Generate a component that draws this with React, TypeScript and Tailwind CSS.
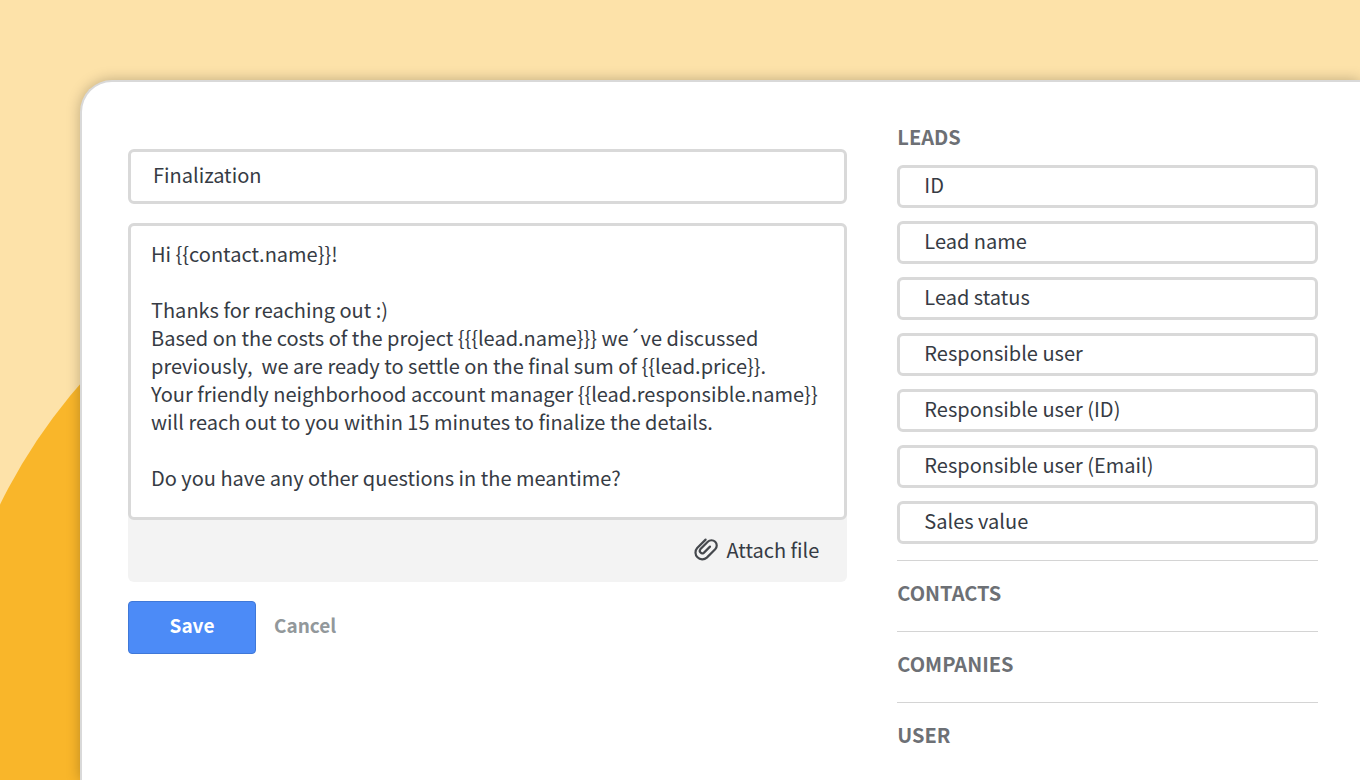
import { useState } from "react";

const message = `Hi {{contact.name}}!

Thanks for reaching out :)
Based on the costs of the project {{{lead.name}}} we´ve discussed
previously,  we are ready to settle on the final sum of {{lead.price}}.
Your friendly neighborhood account manager {{lead.responsible.name}}
will reach out to you within 15 minutes to finalize the details.

Do you have any other questions in the meantime?`;

const leadFields = [
  { label: "ID", token: "{{lead.id}}" },
  { label: "Lead name", token: "{{lead.name}}" },
  { label: "Lead status", token: "{{lead.status}}" },
  { label: "Responsible user", token: "{{lead.responsible.name}}" },
  { label: "Responsible user (ID)", token: "{{lead.responsible.id}}" },
  { label: "Responsible user (Email)", token: "{{lead.responsible.email}}" },
  { label: "Sales value", token: "{{lead.price}}" },
];

const otherSections = ["CONTACTS", "COMPANIES", "USER"];

const PaperclipIcon = () => (
  <svg width="24" height="24" viewBox="0 0 24 24" fill="none" stroke="#45484d" strokeWidth="2.2" strokeLinecap="round" aria-hidden="true">
    <path d="M11.6 1.6 3.2 10a6.8 6.8 0 0 0 9.6 9.6l8.4-8.4a5.2 5.2 0 0 0-7.4-7.4L6.3 11.3a2.5 2.5 0 0 0 3.5 3.5l6.2-6.2" />
  </svg>
);

const App = () => {
  const [title, setTitle] = useState("Finalization");
  const [body, setBody] = useState(message);

  return (
    <div className="relative isolate min-h-screen overflow-hidden bg-[#fde2a9] pl-20 pt-20 font-['Noto_Sans_CJK_SC','Noto_Sans',sans-serif] text-xl text-[#363b44]">
      {/* Background circle */}
      <div className="absolute -left-[59px] top-[187px] -z-10 size-[1140px] rounded-full bg-[#f9b62a]" />

      <main className="grid min-h-[calc(100vh-80px)] grid-cols-[1.71fr_1fr] gap-[50px] rounded-tl-[32px] border-l-2 border-t-2 border-[#d9d9d9] bg-white pl-[46px] pr-[42px] shadow-[0_0_14px_rgba(0,0,0,0.25)]">
        {/* Template editor */}
        <form className="pt-[67px]" onSubmit={(e) => e.preventDefault()}>
          <input
            aria-label="Template name"
            value={title}
            onChange={(e) => setTitle(e.target.value)}
            className="block h-[55px] w-full rounded-md border-3 border-[#d9d9d9] bg-white px-[22px] pb-1 outline-none"
          />
          <div className="mt-[19px] rounded-md bg-[#f3f3f3]">
            <textarea
              aria-label="Message"
              value={body}
              onChange={(e) => setBody(e.target.value)}
              className="block h-[297px] w-full resize-none overflow-hidden whitespace-pre-wrap rounded-md border-3 border-[#d9d9d9] bg-white px-5 py-3.5 leading-7 outline-none"
            />
            <div className="flex h-[62px] items-center justify-end pb-0.5 pr-7">
              <button type="button" className="flex items-center gap-2">
                <PaperclipIcon />
                Attach file
              </button>
            </div>
          </div>
          <div className="mt-[19px] flex items-center gap-[18px] text-[19px] font-bold">
            <button type="submit" className="h-[53px] w-32 rounded border border-[#3f78d8] bg-[#4c8bf7] pb-1 text-white">
              Save
            </button>
            <button type="button" className="pb-1 text-[#92989b]">
              Cancel
            </button>
          </div>
        </form>

        {/* Placeholders */}
        <aside className="pt-[39px]">
          <h2 className="font-bold leading-8 text-[#6d7075]">LEADS</h2>
          <div className="mb-4 mt-3 flex flex-col gap-[13px]">
            {leadFields.map((field) => (
              <button
                key={field.label}
                type="button"
                onClick={() => setBody(body + field.token)}
                className="h-[43px] rounded-md border-3 border-[#d9d9d9] bg-white px-6 pb-1 text-left leading-7"
              >
                {field.label}
              </button>
            ))}
          </div>
          {otherSections.map((section) => (
            <h2 key={section} className="h-[71px] border-t border-[#d4d4d4] pt-4 font-bold leading-8 text-[#6d7075]">
              {section}
            </h2>
          ))}
        </aside>
      </main>
    </div>
  );
};

export default App;
